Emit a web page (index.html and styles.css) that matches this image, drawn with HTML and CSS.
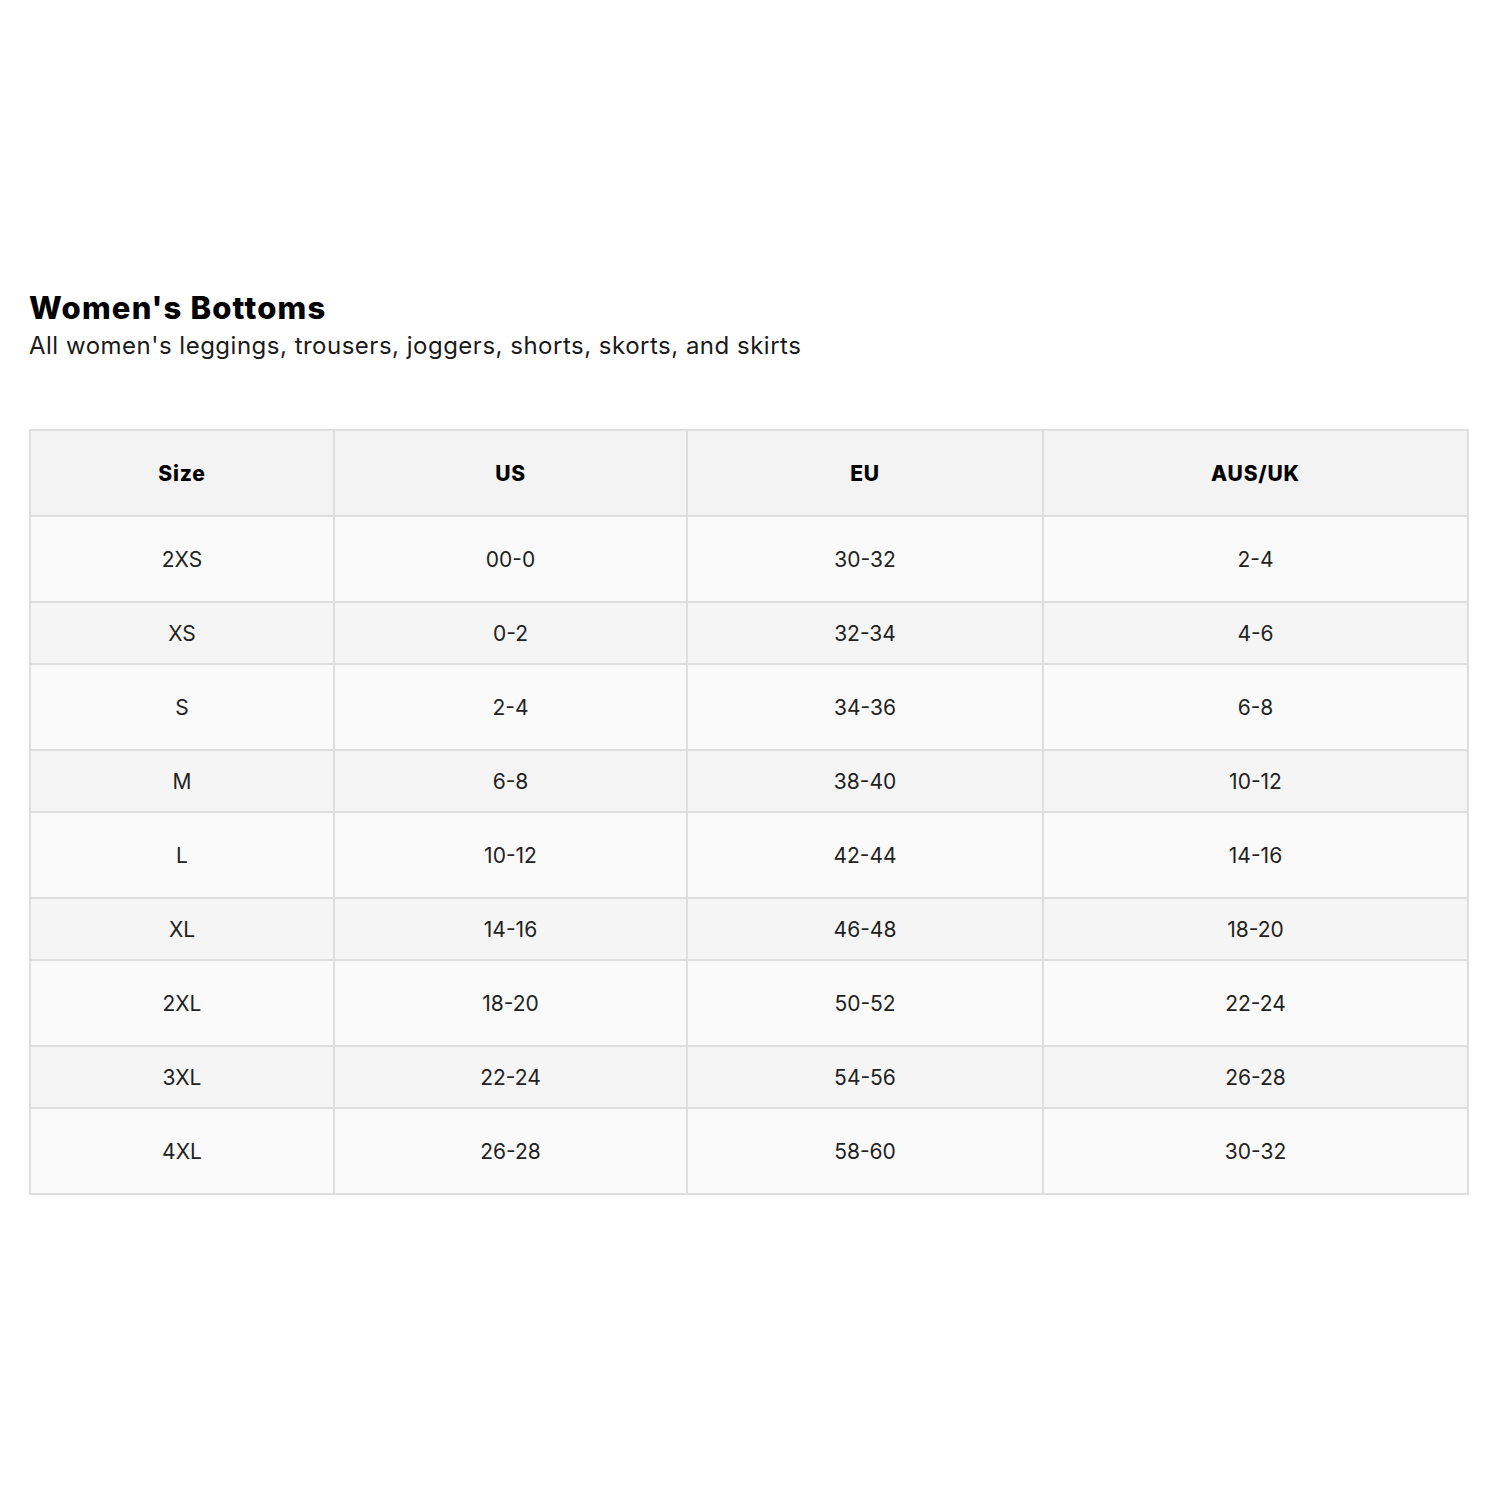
FILE: index.html
```html
<!DOCTYPE html>
<html>
<head>
<meta charset="utf-8">
<link rel="stylesheet" href="styles.css">
</head>
<body>
<div class="page">
  <h1 class="title">Women's Bottoms</h1>
  <p class="subtitle">All women's leggings, trousers, joggers, shorts, skorts, and skirts</p>
  <table class="chart">
    <colgroup>
      <col class="c1"><col class="c2"><col class="c3"><col class="c4">
    </colgroup>
    <thead>
      <tr><th>Size</th><th>US</th><th>EU</th><th>AUS/UK</th></tr>
    </thead>
    <tbody>
      <tr class="tall"><td>2XS</td><td>00-0</td><td>30-32</td><td>2-4</td></tr>
      <tr class="short"><td>XS</td><td>0-2</td><td>32-34</td><td>4-6</td></tr>
      <tr class="tall"><td>S</td><td>2-4</td><td>34-36</td><td>6-8</td></tr>
      <tr class="short"><td>M</td><td>6-8</td><td>38-40</td><td>10-12</td></tr>
      <tr class="tall"><td>L</td><td>10-12</td><td>42-44</td><td>14-16</td></tr>
      <tr class="short"><td>XL</td><td>14-16</td><td>46-48</td><td>18-20</td></tr>
      <tr class="tall"><td>2XL</td><td>18-20</td><td>50-52</td><td>22-24</td></tr>
      <tr class="short"><td>3XL</td><td>22-24</td><td>54-56</td><td>26-28</td></tr>
      <tr class="tall"><td>4XL</td><td>26-28</td><td>58-60</td><td>30-32</td></tr>
    </tbody>
  </table>
</div>
</body>
</html>
```
FILE: styles.css
```css
html, body {
  margin: 0;
  padding: 0;
  background: #ffffff;
}
.page {
  padding: 290px 24px 0 29px;
  font-family: "Inter", "Liberation Sans", sans-serif;
  color: #111;
}
.title {
  margin: 0;
  font-size: 31px;
  font-weight: 800;
  line-height: 36px;
  color: #000;
  letter-spacing: 1.2px;
}
.subtitle {
  margin: 3px 0 0 0;
  font-size: 24px;
  line-height: 34px;
  color: #1a1a1a;
  letter-spacing: 0.5px;
}
.chart {
  margin-top: 66px;
  width: 1436px;
  border-collapse: collapse;
  table-layout: fixed;
  border: 2px solid #dedede;
}
.c1 { width: 304px; }
.c2 { width: 353px; }
.c3 { width: 356px; }
.c4 { width: 425px; }
.chart th, .chart td {
  border: 2px solid #dedede;
  text-align: center;
  padding: 0;
  font-size: 21px;
}
.chart th {
  height: 84px;
  background: #f3f3f3;
  font-weight: 800;
  color: #000;
  letter-spacing: 0.8px;
}
.chart td {
  color: #222;
}
.tall td {
  height: 84px;
  background: #fafafa;
}
.short td {
  height: 60px;
  background: #f5f5f5;
}
```
